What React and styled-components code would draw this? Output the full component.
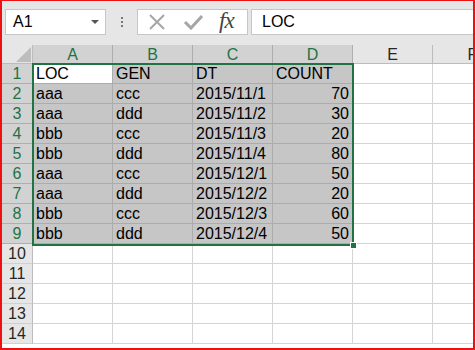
import React from "react";
import styled, { createGlobalStyle } from "styled-components";

const Global = createGlobalStyle`
  html, body { margin: 0; padding: 0; background: #fff; }
  body { font-family: "Liberation Sans", Arial, sans-serif; }
`;

const GREEN = "#217346";

const Frame = styled.div`
  width: 475px;
  height: 350px;
  box-sizing: border-box;
  border-style: solid;
  border-color: #ee1111;
  border-width: 1px 2px 2px 2px;
  overflow: hidden;
  display: flex;
  flex-direction: column;
  background: #fff;
`;

const Toolbar = styled.div`
  height: 44px;
  flex: none;
  background: #e6e6e6;
  display: flex;
  align-items: flex-start;
  padding: 8px 0 0 3px;
  box-sizing: border-box;
  overflow: hidden;
`;

const NameBox = styled.div`
  width: 101px;
  height: 26px;
  box-sizing: border-box;
  border: 1px solid #c6c6c6;
  background: #fff;
  display: flex;
  align-items: center;
  justify-content: space-between;
  padding: 0 6px 0 7px;
  font-size: 16px;
  color: #000;
`;

const Caret = styled.span`
  width: 0;
  height: 0;
  border-left: 4px solid transparent;
  border-right: 4px solid transparent;
  border-top: 4px solid #555;
`;

const Dots = styled.div`
  width: 31px;
  height: 26px;
  display: flex;
  flex-direction: column;
  align-items: center;
  justify-content: center;
  gap: 2px;
`;

const Dot = styled.span`
  width: 2px;
  height: 2px;
  background: #777;
`;

const IconBox = styled.div`
  width: 111px;
  height: 26px;
  box-sizing: border-box;
  border: 1px solid #c6c6c6;
  background: #fff;
  display: flex;
  align-items: center;
  padding-left: 9px;
  gap: 16px;
`;

const Fx = styled.span`
  font-family: "Liberation Serif", "Times New Roman", serif;
  font-style: italic;
  font-size: 23px;
  line-height: 1;
  color: #444;
  margin-top: -3px;
  letter-spacing: -1px;
`;

const FormulaInput = styled.div`
  flex: 1;
  height: 26px;
  margin-left: 3px;
  margin-right: -10px;
  box-sizing: border-box;
  border: 1px solid #c6c6c6;
  background: #fff;
  display: flex;
  align-items: center;
  padding-left: 10px;
  font-size: 16px;
  color: #000;
`;

const SheetWrap = styled.div`
  position: relative;
  flex: 1;
  overflow: hidden;
  background: #fff;
`;

const Grid = styled.div`
  display: grid;
  grid-template-columns: 31px repeat(6, 80px);
  grid-template-rows: 19px;
  grid-auto-rows: 20px;
  font-size: 16px;
`;

const Corner = styled.div`
  position: relative;
  background: #e6e6e6;
  border-right: 1px solid #bcbcbc;
  border-bottom: 1px solid #bcbcbc;
  box-sizing: border-box;
  overflow: hidden;
  &::after {
    content: "";
    position: absolute;
    right: 1px;
    bottom: 1px;
    width: 0;
    height: 0;
    border-left: 15px solid transparent;
    border-bottom: 15px solid #bdbdbd;
  }
`;

const ColHead = styled.div`
  background: ${(p) => (p.$sel ? "#d2d2d2" : "#e6e6e6")};
  color: ${(p) => (p.$sel ? GREEN : "#262626")};
  border-right: 1px solid ${(p) => (p.$sel ? "#aeaeae" : "#bcbcbc")};
  border-bottom: 1px solid #bcbcbc;
  box-sizing: border-box;
  display: flex;
  align-items: center;
  justify-content: center;
  line-height: 1;
  padding-top: 1px;
`;

const RowHead = styled.div`
  background: ${(p) => (p.$sel ? "#d2d2d2" : "#e6e6e6")};
  color: ${(p) => (p.$sel ? GREEN : "#262626")};
  border-right: 1px solid #bcbcbc;
  border-bottom: 1px solid ${(p) => (p.$sel ? "#aeaeae" : "#d0d0d0")};
  box-sizing: border-box;
  display: flex;
  align-items: center;
  justify-content: center;
  line-height: 1;
  padding-top: 1px;
`;

const Cell = styled.div`
  background: ${(p) => (p.$active ? "#fff" : p.$sel ? "#c6c6c6" : "#fff")};
  border-right: 1px solid ${(p) => (p.$sel ? "#acacac" : "#d4d4d4")};
  border-bottom: 1px solid ${(p) => (p.$sel ? "#acacac" : "#d4d4d4")};
  box-sizing: border-box;
  display: flex;
  align-items: flex-end;
  justify-content: ${(p) => (p.$right ? "flex-end" : "flex-start")};
  padding: 0 3px 0 3px;
  line-height: 18px;
  color: #000;
  white-space: nowrap;
  overflow: hidden;
`;

const Selection = styled.div`
  position: absolute;
  left: 30px;
  top: 18px;
  width: 322px;
  height: 183px;
  box-sizing: border-box;
  border: 2px solid ${GREEN};
  pointer-events: none;
`;

const Handle = styled.div`
  position: absolute;
  right: -5px;
  bottom: -5px;
  width: 7px;
  height: 7px;
  box-sizing: border-box;
  background: ${GREEN};
  border: 1px solid #fff;
`;

const data = [
  ["LOC", "GEN", "DT", "COUNT"],
  ["aaa", "ccc", "2015/11/1", 70],
  ["aaa", "ddd", "2015/11/2", 30],
  ["bbb", "ccc", "2015/11/3", 20],
  ["bbb", "ddd", "2015/11/4", 80],
  ["aaa", "ccc", "2015/12/1", 50],
  ["aaa", "ddd", "2015/12/2", 20],
  ["bbb", "ccc", "2015/12/3", 60],
  ["bbb", "ddd", "2015/12/4", 50],
];

const cols = ["A", "B", "C", "D", "E", "F"];

const XIcon = () => (
  <svg width="20" height="16" viewBox="0 0 20 16">
    <path d="M3 1 L17 15 M17 1 L3 15" stroke="#a6a6a6" strokeWidth="2" fill="none" />
  </svg>
);

const CheckIcon = () => (
  <svg width="20" height="16" viewBox="0 0 20 16">
    <path d="M2 8 L8 14 L19 2" stroke="#a6a6a6" strokeWidth="3" fill="none" />
  </svg>
);

export default function App() {
  const rows = [];
  for (let r = 1; r <= 14; r++) {
    const sel = r <= 9;
    rows.push(
      <RowHead key={"h" + r} $sel={sel}>
        {r}
      </RowHead>
    );
    cols.forEach((c, ci) => {
      const v = sel && ci < 4 ? data[r - 1][ci] : "";
      rows.push(
        <Cell
          key={c + r}
          $sel={sel && ci < 4}
          $active={r === 1 && ci === 0}
          $right={typeof v === "number"}
        >
          {v}
        </Cell>
      );
    });
  }
  return (
    <Frame>
      <Global />
      <Toolbar>
        <NameBox>
          <span>A1</span>
          <Caret />
        </NameBox>
        <Dots>
          <Dot />
          <Dot />
          <Dot />
        </Dots>
        <IconBox>
          <XIcon />
          <CheckIcon />
          <Fx>fx</Fx>
        </IconBox>
        <FormulaInput>LOC</FormulaInput>
      </Toolbar>
      <SheetWrap>
        <Grid>
          <Corner />
          {cols.map((c, i) => (
            <ColHead key={c} $sel={i < 4}>
              {c}
            </ColHead>
          ))}
          {rows}
        </Grid>
        <Selection>
          <Handle />
        </Selection>
      </SheetWrap>
    </Frame>
  );
}
